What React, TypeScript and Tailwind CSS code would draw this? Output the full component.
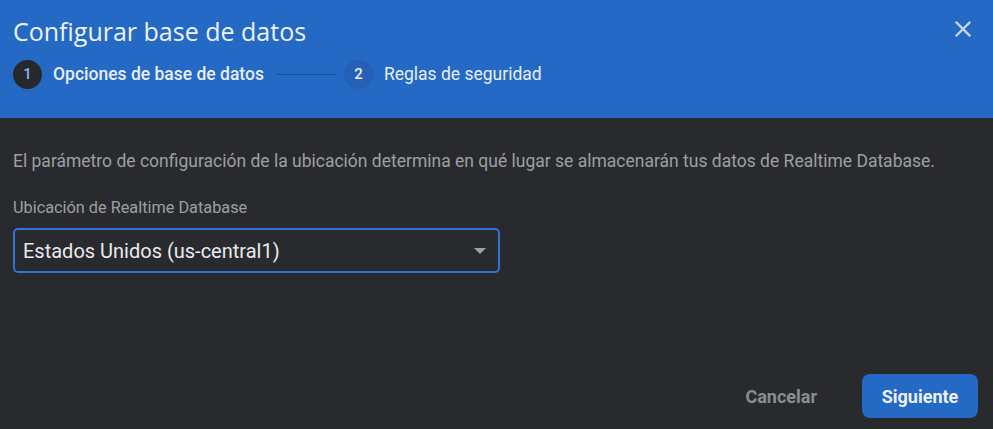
import React from "react";

export default function App() {
  return (
    <div className="w-[993px] h-[429px] bg-[#292a2d] flex flex-col overflow-hidden" style={{ fontFamily: "Roboto, 'Noto Sans', sans-serif" }}>
      <div className="h-[118px] bg-[#2469c4] relative px-[13px] pt-[15px] flex flex-col">
        <h1 className="text-[25px] leading-[32px] font-medium text-[#eef2f8]" style={{ fontFamily: "'Open Sans', Roboto, sans-serif" }}>Configurar base de datos</h1>
        <div className="flex items-center mt-[13px]">
          <div className="w-[29px] h-[29px] rounded-full bg-[#26282b] flex items-center justify-center text-[15px] font-medium text-[#8ab4f8]">1</div>
          <span className="ml-[11px] text-[17.5px] font-medium text-[#e8eef8]">Opciones de base de datos</span>
          <div className="w-[60px] h-px bg-[#1d4f96] ml-[12px] mr-[8px]"></div>
          <div className="w-[29px] h-[29px] rounded-full bg-[#2660b6] flex items-center justify-center text-[15px] font-medium text-[#e8eef8]">2</div>
          <span className="ml-[11px] text-[17.5px] text-[#e8eef8]">Reglas de seguridad</span>
        </div>
        <button className="absolute right-[18px] top-[17px] w-[24px] h-[24px] flex items-center justify-center">
          <svg width="22" height="22" viewBox="0 0 24 24"><path d="M5 5 L19 19 M19 5 L5 19" stroke="#c7d3e8" strokeWidth="2.6" strokeLinecap="square" /></svg>
        </button>
      </div>
      <div className="flex-1 px-[13px] pt-[31px] flex flex-col">
        <p className="text-[17.5px] leading-[24px] text-[#9aa0a6]">El parámetro de configuración de la ubicación determina en qué lugar se almacenarán tus datos de Realtime Database.</p>
        <label className="mt-[24px] text-[16.3px] leading-[22px] text-[#9aa0a6]">Ubicación de Realtime Database</label>
        <div className="mt-[9px] w-[487px] h-[45px] border-2 border-[#2f73d6] rounded-[5px] flex items-center pl-[8px] pr-[12px]">
          <span className="flex-1 text-[20px] text-[#e8eaed]">Estados Unidos (us-central1)</span>
          <svg width="12" height="6" viewBox="0 0 12 6"><path d="M0 0 L12 0 L6 6 Z" fill="#9aa0a6" /></svg>
        </div>
        <div className="flex-1"></div>
        <div className="flex items-center justify-end gap-[45px] pb-[11px] pr-[2px]">
          <button className="text-[18px] font-bold text-[#8a8d91]">Cancelar</button>
          <button className="w-[116px] h-[44px] rounded-[8px] bg-[#2469c4] text-[18px] font-bold text-[#eef2f8]">Siguiente</button>
        </div>
      </div>
    </div>
  );
}
